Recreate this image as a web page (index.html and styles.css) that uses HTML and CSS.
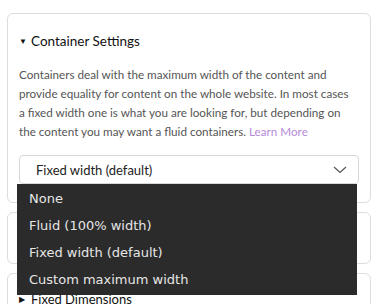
FILE: index.html
```html
<!DOCTYPE html>
<html lang="en">
<head>
    <meta charset="UTF-8">
    <meta name="viewport" content="width=device-width, initial-scale=1.0">
    <title>Container Settings</title>
    <link rel="stylesheet" href="styles.css">
</head>
<body>
    <div class="panel open">
        <div class="panel-title"><span class="arrow">▼</span>Container Settings</div>
        <p class="panel-text">
            Containers deal with the maximum width of the content and<br>
            provide equality for content on the whole website. In most cases<br>
            a fixed width one is what you are looking for, but depending on<br>
            the content you may want a fluid containers. <a href="#" class="more">Learn More</a>
        </p>
        <div class="select-wrap">
            <div class="select">
                <span>Fixed width (default)</span>
                <svg class="chevron" width="14" height="8" viewBox="0 0 14 8">
                    <path d="M1 1 L7 6.5 L13 1" fill="none" stroke="#555" stroke-width="1.2"/>
                </svg>
            </div>
            <ul class="options">
                <li>None</li>
                <li>Fluid (100% width)</li>
                <li>Fixed width (default)</li>
                <li>Custom maximum width</li>
            </ul>
        </div>
    </div>

    <div class="panel small">
        <div class="panel-title closed"><span class="arrow">▶</span>Fixed Width</div>
    </div>

    <div class="panel">
        <div class="panel-title closed"><span class="arrow">▶</span>Fixed Dimensions</div>
    </div>
</body>
</html>
```

FILE: styles.css
```css
body {
    font-family: Lato, "Noto Sans", sans-serif;
    margin: 0;
    padding: 13px 7px;
    background-color: #fff;
    color: #222;
}

.panel {
    border: 1px solid #ddd;
    border-radius: 6px;
    padding: 0 11px;
    background-color: #fff;
}

.panel + .panel {
    margin-top: 9px;
}

.panel.open {
    padding-bottom: 18px;
}

.panel.small {
    height: 50px;
}

.panel-title {
    font-size: 13.5px;
    line-height: 20px;
    padding-top: 17px;
    color: #111;
    display: flex;
    align-items: center;
}

.panel-title.closed {
    padding-top: 15px;
    font-size: 13px;
}

.arrow {
    font-size: 8px;
    width: 12px;
    line-height: 20px;
}

.panel-text {
    margin: 14px 0 0;
    font-size: 11.7px;
    line-height: 19px;
    color: #555;
    white-space: nowrap;
}

.more {
    color: #b58ad8;
    text-decoration: none;
}

.select-wrap {
    position: relative;
    margin-top: 14px;
}

.select {
    height: 27px;
    border: 1px solid #d8d8d8;
    border-radius: 4px;
    display: flex;
    align-items: center;
    justify-content: space-between;
    padding: 0 11px 0 16px;
    font-size: 13px;
    color: #222;
}

.options {
    position: absolute;
    top: 29px;
    left: -2px;
    width: 340px;
    margin: 0;
    padding: 1px 0 2px;
    list-style: none;
    background-color: #2b2b2b;
    font-family: "DejaVu Sans", sans-serif;
    font-size: 13px;
    color: #e6e6e6;
    box-sizing: border-box;
}

.options li {
    height: 27px;
    line-height: 27px;
    padding-left: 12px;
}
```
